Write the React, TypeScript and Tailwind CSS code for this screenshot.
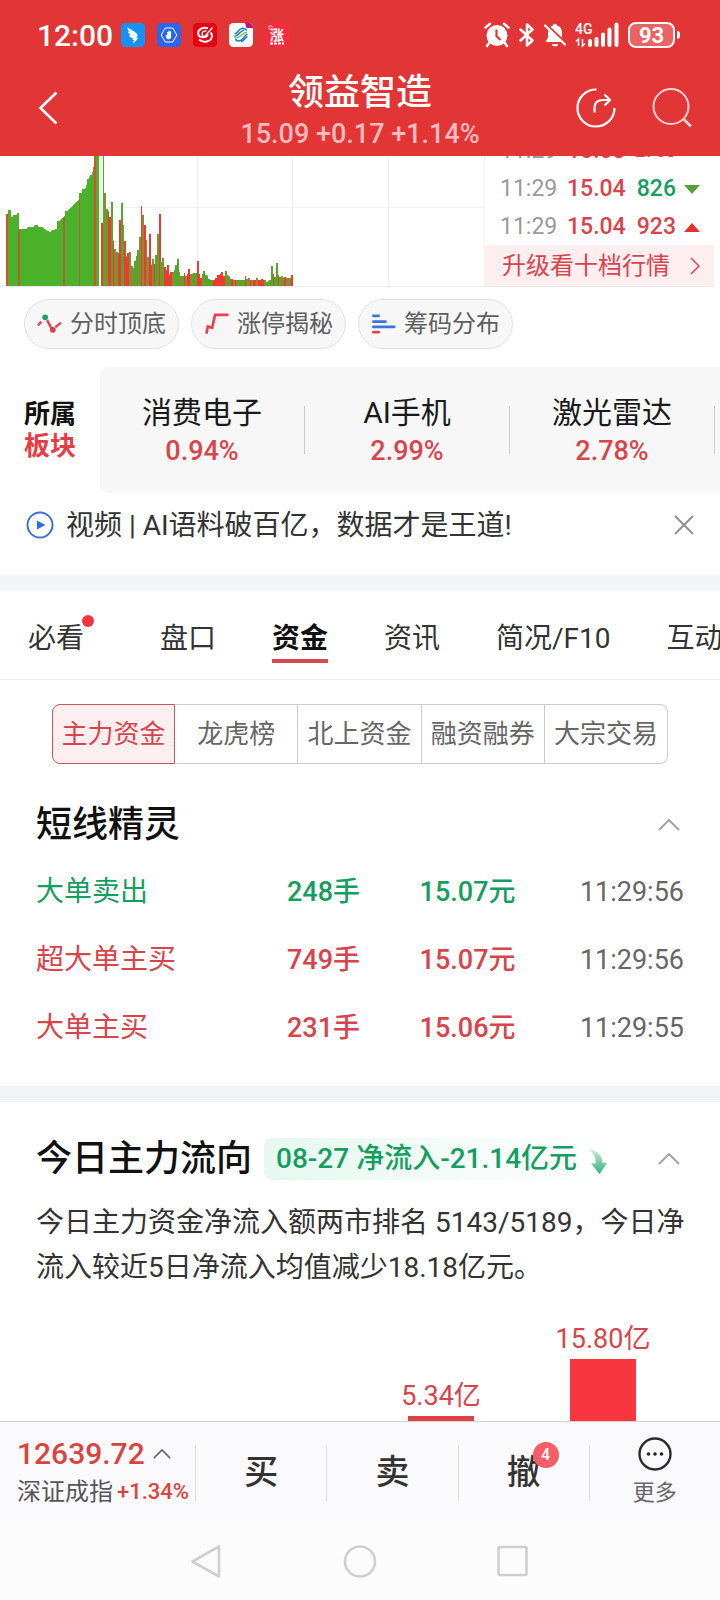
import React from 'react'
import clsx from 'clsx'

type Tone = 'up' | 'down'

interface ITrade {
  name: string
  count: string
  price: string
  time: string
  tone: Tone
}

const UP = 'text-[#d8444c]'
const DOWN = 'text-[#149e60]'

const ticks = [
  { time: '11:29', price: '15.03', volume: '2763', tone: 'up' },
  { time: '11:29', price: '15.04', volume: '826', tone: 'down' },
  { time: '11:29', price: '15.04', volume: '923', tone: 'up' },
]

const boards = [
  { name: '消费电子', change: '0.94%' },
  { name: 'AI手机', change: '2.99%' },
  { name: '激光雷达', change: '2.78%' },
]

const tabs = ['必看', '盘口', '资金', '资讯', '简况/F10', '互动']

const segments = ['主力资金', '龙虎榜', '北上资金', '融资融券', '大宗交易']

const trades: ITrade[] = [
  { name: '大单卖出', count: '248手', price: '15.07元', time: '11:29:56', tone: 'down' },
  { name: '超大单主买', count: '749手', price: '15.07元', time: '11:29:56', tone: 'up' },
  { name: '大单主买', count: '231手', price: '15.06元', time: '11:29:55', tone: 'up' },
]

// call auction outline
const auction =
  'M0 130V58H2V54H5V61H7V59H11V57H13V73H20L22 71H27L29 69H32V71H36L38 73L42 75L44 76L47 74L51 73V65H53L56 62H57L59 59V55H61L64 52L67 49L70 46L73 44V37H76V33H79L81 28V23H83L84 19H86L87 14L88 9V0H93V130Z'

// one letter of colour and the height for every minute after the open
const minutes =
  'r63 g130 o93 g77 r75 r69 g84 r45 o37 o34 r33 r66 g83 g61 r45 r29 r33 o34 o20 o18 g25 g30 g36 o49 r80 o71 r61 o46 o29 r52 r21 o27 r22 g31 g52 r72 o24 g28 r19 r16 r21 r11 r14 o14 g16 g21 g27 o14 o10 g10 r13 o10 r12 r17 o12 o12 g13 g13 r25 r12 r8 o12 g15 g11 o10 g7 g6 g6 r6 r8 r11 r11 r12 r14 r10 g15 o11 g10 o7 r7 o6 r6 o6 g6 g6 g6 g6 r10 o7 o8 r6 o6 r6 r6 o8 r6 r6 r7 r6 o6 g4 g5 g6 g20 r12 g9 g23 r11 o9 g10 o8 r9 o8 o8 o8 r11'.split(' ')

const barColor: Record<string, string> = { r: '#f0392f', g: '#4faa2b', o: '#8c8a33' }

function VolumeChart() {
  return (
    <svg viewBox="0 0 478 130" preserveAspectRatio="none" className="block h-[130px] w-full" shapeRendering="crispEdges">
      <path d="M191.5 0V130M286.5 0V130M382.5 0V130M96 51.5H478" stroke="#efefef" strokeWidth="1.5" fill="none" />
      <path d={auction} fill="#4cb12a" />
      <path d="M1 58V130M13 73V130M58 61V130M73.500 44V130M89 0V130" stroke="#b5622f" strokeWidth="1.6" />
      <path d="M1 58V130M89 6V130" stroke="#e04a35" strokeWidth="1.6" />
      <path d="M95 0V68" stroke="#e2f2dc" strokeWidth="2" />
      {minutes.map((item, index) => {
        const height = Number(item.slice(1))
        return (
          <rect key={index} x={95 + index * 1.65} y={130 - height} width="1.8" height={height} fill={barColor[item[0]]} />
        )
      })}
    </svg>
  )
}

function StatusBar() {
  return (
    <div className="flex h-[70px] items-center justify-between pr-10 pl-[37px]">
      <div className="flex items-center gap-3">
        <span className="-mr-1 text-[30px] font-medium">12:00</span>
        <svg viewBox="0 0 24 24" className="size-6">
          <rect width="24" height="24" rx="4.500" fill="#1492f5" />
          <path d="M6.200 4.500c3 1.800 7 3.400 9.600 6.200 1 1.100.9 2.200.3 3.300l-.7 1.300h1.800l-5.200 5.500 1-3.900h-1.600l.8-1.700c-2.400-.2-3.800-1.500-4.300-3.200l2.500.5C8.200 11.500 7 9.900 7 8.300l2.300 1C7.600 7.900 6.500 6.400 6.200 4.500z" fill="#fff" />
        </svg>
        <svg viewBox="0 0 24 24" className="size-6">
          <rect width="24" height="24" rx="4.500" fill="#2a67ec" />
          <path d="M8.200 5h7.600l4 7-4 7H8.200l-4-7z" fill="none" stroke="#fff" strokeWidth="1" />
          <path d="M8.800 11.800l1.400.8V9h1.300v2.500V7.800h1.300v3.700V8.500h1.300v6.300l-1.500 1.400h-2.200L8.800 14z" fill="#fff" />
        </svg>
        <svg viewBox="0 0 24 24" className="size-6">
          <rect width="24" height="24" rx="4.500" fill="#e60012" />
          <path d="M15 5.200C9.500 3.400 4.500 6.800 5.200 11c.6 3.200 5 4.200 8 2.400M6 16.500c4 3.600 12.600 2.700 13-3.500 0-1.400-.5-2.500-1.500-3.500" fill="none" stroke="#fff" strokeWidth="2" />
          <path d="M19.500 4.500l-8 9.300M13.500 8.200a3 3 0 1 0 1.600 3.300" fill="none" stroke="#fff" strokeWidth="1.400" />
        </svg>
        <svg viewBox="0 0 24 24" className="size-6">
          <rect width="24" height="24" rx="4.500" fill="#fff" />
          <path d="M5.500 11c3-.5 4-5.500 8-5.800 2 0 3.500 1 4.500 2.200M5.500 13.500c4-.5 5.500-6 9.500-6.200M18.500 11c-3 .5-4 7-9 7-1.500 0-2.500-.7-3.200-1.700M18.500 13.500c-2 .5-3 4.500-6.500 5.300" fill="none" stroke="#1b80c4" strokeWidth="1.500" />
          <path d="M6 15.500c5 0 6.500-6 12-6.300" fill="none" stroke="#7fbf45" strokeWidth="1.600" />
          <path d="M16 0h3.500A4.500 4.500 0 0 1 24 4.500V5h-6.500z" fill="#b5157f" />
        </svg>
        <svg viewBox="0 0 24 24" className="size-6">
          <rect width="24" height="24" rx="4.500" fill="#fb2b3f" />
          <circle cx="5.500" cy="4.500" r="1.800" fill="none" stroke="#fff" strokeWidth="0.800" />
          <text x="12" y="17" textAnchor="middle" fontSize="14" fontWeight="700" fill="#fff">涨</text>
          <path d="M5 20.500H19" stroke="#fff" strokeWidth="2" strokeDasharray="3 1" />
        </svg>
      </div>
      <div className="flex items-center gap-[9px]">
        <svg viewBox="0 0 26 26" className="size-[26px]">
          <circle cx="13" cy="13.500" r="10.500" fill="#fff" />
          <path d="M1.500 5.500L6 1.800M24.500 5.500L20 1.800M5.500 20.500L3 24M20.500 20.500L23 24" stroke="#fff" strokeWidth="2.400" strokeLinecap="round" />
          <path d="M12.500 7.500V14L16.500 18" stroke="#e23536" strokeWidth="2.200" fill="none" />
        </svg>
        <svg viewBox="0 0 16 24" className="h-6 w-4" fill="none" stroke="#fff" strokeWidth="2.500" strokeLinejoin="round" strokeLinecap="round">
          <path d="M1.500 6.500L13.500 17.500L8 22.500V1.500L13.500 6.500L1.500 17.500" />
        </svg>
        <svg viewBox="0 0 22 24" className="h-6 w-[22px]">
          <path d="M11 .8a2 2 0 0 1 2 1.700c3.400.9 5 3.600 5 7v5l2.500 4.500h-19L4 14.500v-5c0-3.400 1.600-6.100 5-7a2 2 0 0 1 2-1.700z" fill="#fff" />
          <path d="M8 21h6a3 2.500 0 0 1-6 0z" fill="#fff" />
          <path d="M1.500 .5L21.500 19.500" stroke="#e23536" strokeWidth="2" />
          <path d="M1 2.500L21 21.500" stroke="#fff" strokeWidth="2.200" strokeLinecap="round" />
        </svg>
        <svg viewBox="0 0 44 26" className="h-[26px] w-11">
          <text x="0" y="12" fontSize="14" fontWeight="500" fill="#fff">4G</text>
          <path d="M1 19.500L3.500 17V24M7.500 17V24L10 21.500" stroke="#fff" strokeWidth="1.500" fill="none" />
          <path d="M15 19V23M21.500 17V23M28 12.500V23M34.500 7.500V23M41.500 2.500V23" stroke="#fff" strokeWidth="4" strokeLinecap="round" />
        </svg>
        <div className="flex items-center gap-0.5">
          <span className="flex h-[26px] w-[47px] items-center justify-center rounded-lg border-2 border-white bg-[#ea6465] text-[22px] font-bold">93</span>
          <span className="h-2 w-[3px] rounded-r-sm bg-white" />
        </div>
      </div>
    </div>
  )
}

function Chevron({ className = 'h-3 w-[22px]' }: { className?: string }) {
  return (
    <svg viewBox="0 0 22 12" className={className} fill="none" stroke="currentColor" strokeWidth="2">
      <path d="M1 11L11 1L21 11" />
    </svg>
  )
}

function SectionToggle() {
  return (
    <button aria-label="收起" className="ml-auto flex h-10 items-center pr-1 text-[#a3a3a3]">
      <Chevron />
    </button>
  )
}

export default function App() {
  return (
    <div className="flex h-screen flex-col overflow-hidden bg-white font-[Roboto,'Noto_Sans_CJK_SC',sans-serif] text-[#333]">
      <header className="shrink-0 bg-[#e23536] text-white">
        <StatusBar />
        <div className="grid h-[86px] grid-cols-[1fr_auto_1fr] items-start">
          <button aria-label="返回" className="flex h-[76px] items-center pl-[38px]">
            <svg viewBox="0 0 20 34" className="h-[34px] w-5" fill="none" stroke="#fff" strokeWidth="2.600">
              <path d="M18.500 1.500L2.500 17L18.500 32.500" />
            </svg>
          </button>
          <div className="text-center">
            <h1 className="text-[36px] leading-[46px] font-medium">领益智造</h1>
            <p className="text-[27px] leading-9 font-medium text-[#f7bcbd]">15.09 +0.17 +1.14%</p>
          </div>
          <div className="flex h-[76px] items-center justify-end gap-9 pr-7">
            <button aria-label="分享">
              <svg viewBox="0 0 40 40" className="size-10" fill="none" stroke="#fff" strokeWidth="2.200">
                <path d="M20.500 1.500A18.500 18.500 0 1 0 38.500 20" />
                <path d="M18.500 24.500V20C18.500 14 22 12 27 12H33.500M28.500 6.500L34 12L28.500 17.500" />
              </svg>
            </button>
            <button aria-label="搜索">
              <svg viewBox="0 0 40 40" className="size-10" fill="none" stroke="#fbd3d3" strokeWidth="2">
                <circle cx="19" cy="18.500" r="17.500" />
                <path d="M32 31.500L39 38.500" strokeWidth="2.600" />
              </svg>
            </button>
          </div>
        </div>
      </header>

      <main className="flex min-h-0 flex-1 flex-col overflow-hidden">
        <section className="mx-1.5 flex shrink-0 border-b border-[#e9e9e9]">
          <div className="min-w-0 flex-1">
            <VolumeChart />
          </div>
          <div className="flex h-[130px] w-[230px] flex-col justify-end overflow-hidden border-l border-[#f2f2f2]">
            {ticks.map((tick, index) => (
              <div key={index} className="flex h-[38px] shrink-0 items-center pt-0.5 pr-3.5 pl-[15px] text-[23px] font-medium">
                <span className="w-[67px] font-normal text-[#999]">{tick.time}</span>
                <span className={UP}>{tick.price}</span>
                <span className={clsx('ml-auto', tick.volume.length > 3 && 'text-lg', tick.tone === 'up' ? UP : DOWN)}>{tick.volume}</span>
                <svg viewBox="0 0 16 9" className={clsx('ml-2 h-[9px] w-4', index === 0 && 'invisible')}>
                  {tick.tone === 'up' ? <path d="M8 0L16 9H0z" fill="#e8302f" /> : <path d="M0 0H16L8 9z" fill="#5a9e3a" />}
                </svg>
              </div>
            ))}
            <a href="#level2" className={clsx('flex h-[41px] shrink-0 items-center justify-between bg-[#fdeeef] pr-3.5 pl-[17px] text-2xl', UP)}>
              升级看十档行情
              <svg viewBox="0 0 10 18" className="h-[18px] w-2.5" fill="none" stroke="currentColor" strokeWidth="1.500">
                <path d="M1 1L9 9L1 17" />
              </svg>
            </a>
          </div>
        </section>

        <div className="mx-6 mt-3 flex shrink-0 gap-3 text-2xl text-[#5e5e5e]">
          <button className="flex h-[50px] items-center gap-2 rounded-full border border-[#e2e2e2] bg-[#f7f7f7] px-3">
            <svg viewBox="0 0 26 24" className="h-6 w-[25px]" fill="none" stroke="#dc4850" strokeWidth="2.500">
              <path d="M1 13.500L4.500 9.500M10.500 8L15 16.500M19 15.500L25 10.500" />
              <circle cx="8.500" cy="5" r="3" fill="#1da367" stroke="none" />
              <circle cx="16.500" cy="18" r="3" fill="#dc3c46" stroke="none" />
            </svg>
            分时顶底
          </button>
          <button className="flex h-[50px] items-center gap-2 rounded-full border border-[#e2e2e2] bg-[#f7f7f7] px-3">
            <svg viewBox="0 0 26 24" className="h-6 w-[25px]" fill="none" stroke="#e5434d" strokeWidth="2.800">
              <path d="M2.500 22L4 14.500L8.500 16L11.500 2.500H25.500" />
            </svg>
            涨停揭秘
          </button>
          <button className="flex h-[50px] items-center gap-2 rounded-full border border-[#e2e2e2] bg-[#f7f7f7] px-3">
            <svg viewBox="0 0 26 24" className="h-6 w-[25px]" fill="none" stroke="#3c76dc" strokeWidth="3" strokeLinecap="round">
              <path d="M2.500 3.500H8M2.500 9.500H15M2.500 15H24" />
              <path d="M2.500 20.500H8" stroke="#dc4650" />
            </svg>
            筹码分布
          </button>
        </div>

        <section className="mt-[18px] flex h-[126px] shrink-0 items-stretch">
          <h2 className="flex w-[100px] shrink-0 flex-col justify-center pl-6 text-[26px] leading-8 font-bold text-[#111]">
            所属
            <span className="text-[#e63c45]">板块</span>
          </h2>
          <ul className="flex min-w-0 flex-1 items-center overflow-hidden rounded-l-lg bg-[#f7f7f7]">
            {boards.map(board => (
              <li key={board.name} className="flex h-12 w-[205px] shrink-0 flex-col items-center justify-center border-r border-[#ccc] pt-1 text-center whitespace-nowrap">
                <span className="text-[30px] leading-[38px] text-[#1a1a1a]">{board.name}</span>
                <span className={clsx('text-[27px] leading-[38px] font-medium', UP)}>{board.change}</span>
              </li>
            ))}
          </ul>
        </section>

        <div className="mb-[18px] flex h-16 shrink-0 items-center px-[26px]">
          <svg viewBox="0 0 28 28" className="size-7" fill="none">
            <circle cx="14" cy="14" r="12.500" stroke="#3a74d8" strokeWidth="2" />
            <path d="M11 9.500V18.500L19.500 14z" fill="#2a6fee" />
          </svg>
          <a href="#video" className="ml-3 pt-0.5 text-[28px]">视频 | AI语料破百亿，数据才是王道!</a>
          <button aria-label="关闭" className="ml-auto">
            <svg viewBox="0 0 20 20" className="size-5" stroke="#919191" strokeWidth="2">
              <path d="M1 1L19 19M19 1L1 19" />
            </svg>
          </button>
        </div>

        <div className="h-4 shrink-0 bg-[#f3f4f9]" />

        <nav className="flex h-[89px] shrink-0 items-center gap-14 overflow-hidden border-b border-[#ededed] pt-2 pl-7 text-[28px] leading-10 whitespace-nowrap">
          {tabs.map((tab, index) => (
            <button key={tab} className={clsx('relative shrink-0', index === 0 && 'mr-5', tab === '资金' && 'font-bold text-[#111]')}>
              {tab}
              {index === 0 && <span className="absolute -top-1 -right-2.5 size-3 rounded-full bg-[#f4333f]" />}
              {tab === '资金' && <span className="absolute inset-x-0 -bottom-1 h-1 bg-[#d34a52]" />}
            </button>
          ))}
        </nav>

        <div className="mx-[52px] mt-6 mb-7 grid h-[60px] shrink-0 grid-cols-5 text-[26px] text-[#666]">
          {segments.map((segment, index) => (
            <button
              key={segment}
              className={clsx(
                'border-y border-r whitespace-nowrap',
                index === 0 ? 'rounded-l-lg border-l border-[#c9545b] bg-[#fdeeef] text-[#d8444c]' : 'border-[#ccc]',
                index === segments.length - 1 && 'rounded-r-lg'
              )}
            >
              {segment}
            </button>
          ))}
        </div>

        <section className="shrink-0 px-9 pb-6">
          <div className="flex h-[66px] items-center">
            <h2 className="text-[36px] font-medium text-[#111]">短线精灵</h2>
            <SectionToggle />
          </div>
          <table className="w-full table-fixed text-right text-[27px]">
            <tbody>
              {trades.map(trade => (
                <tr key={trade.name} className={clsx('h-[68px]', trade.tone === 'up' ? UP : DOWN)}>
                  <td className="w-[30%] text-left text-[28px]">{trade.name}</td>
                  <td className="w-[20%] font-medium">{trade.count}</td>
                  <td className="w-[24%] font-medium">{trade.price}</td>
                  <td className="w-[26%] text-[#666]">{trade.time}</td>
                </tr>
              ))}
            </tbody>
          </table>
        </section>

        <div className="h-4 shrink-0 bg-[#f3f4f9]" />

        <section className="flex flex-1 flex-col pt-6">
          <div className="flex h-[66px] shrink-0 items-center px-9">
            <h2 className="text-[36px] font-medium text-[#111]">今日主力流向</h2>
            <div className={clsx('ml-3 flex h-[42px] items-center gap-3 rounded-lg bg-linear-to-r from-[#e6f8f0] to-white pr-2 pl-3 text-[28px] font-medium', DOWN)}>
              08-27 净流入-21.14亿元
              <svg viewBox="0 0 18 26" className="mt-1 h-[26px] w-[18px]">
                <defs>
                  <linearGradient id="fall" x1="0" y1="0" x2="0" y2="1">
                    <stop offset="0" stopColor="#c9ecdc" />
                    <stop offset="1" stopColor="#35b27c" />
                  </linearGradient>
                </defs>
                <path d="M0 1C9 3 13.500 8 13.500 15H18L10.500 26L2 15.500H6.500C7 10 5 5 0 1z" fill="url(#fall)" />
              </svg>
            </div>
            <SectionToggle />
          </div>
          <p className="mt-2 pr-6 pl-9 text-[28px] leading-[45px]">
            今日主力资金净流入额两市排名 5143/5189，今日净流入较近5日净流入均值减少18.18亿元。
          </p>
          <div className={clsx('grid flex-1 grid-cols-4 items-end px-9 text-[27px] leading-10', UP)}>
            <div className="col-start-3 flex flex-col items-center">
              5.34亿
              <div className="h-[5px] w-[66px] bg-[#e0404a]" />
            </div>
            <div className="flex flex-col items-center">
              15.80亿
              <div className="h-[62px] w-[66px] bg-[#f83640]" />
            </div>
          </div>
        </section>
      </main>

      <footer className="shrink-0 bg-[#fcfcfc]">
        <div className="flex h-[102px] items-center border-t border-[#d3d4d8] bg-[#fafafc]">
          <div className="w-[195px] shrink-0 pl-[17px] leading-[38px] whitespace-nowrap">
            <button className="flex items-center gap-2 text-[30px] font-medium text-[#d8443f]">
              12639.72
              <Chevron className="h-[10px] w-[18px] text-[#666]" />
            </button>
            <div className="flex items-center gap-1 text-2xl leading-[38px] text-[#55555a]">
              深证成指
              <span className="text-[22px] font-medium text-[#d8443f]">+1.34%</span>
            </div>
          </div>
          <div className="grid flex-1 grid-cols-4">
            <button className="h-14 border-l border-[#dcdce0] text-[34px] font-medium">买</button>
            <button className="h-14 border-l border-[#dcdce0] text-[34px] font-medium">卖</button>
            <button className="h-14 border-l border-[#dcdce0] text-[34px] font-medium">
              <span className="relative">
                撤
                <span className="absolute -top-2.5 -right-[18px] flex size-[26px] items-center justify-center rounded-full bg-[#f55d67] text-base text-white">4</span>
              </span>
            </button>
            <button className="flex h-14 flex-col items-center justify-center border-l border-[#dcdce0] text-[22px] leading-8 text-[#666]">
              <svg viewBox="0 0 34 34" className="mb-1.5 size-[34px] shrink-0" fill="#222">
                <circle cx="17" cy="17" r="15.500" fill="none" stroke="#2b2b2b" strokeWidth="2.400" />
                <circle cx="10.500" cy="17" r="1.800" />
                <circle cx="17" cy="17" r="1.800" />
                <circle cx="23.500" cy="17" r="1.800" />
              </svg>
              更多
            </button>
          </div>
        </div>
        <div className="flex h-[77px] items-center justify-center gap-[120px]">
          <button aria-label="后退">
            <svg viewBox="0 0 34 34" className="size-[34px]" fill="none" stroke="#cfcfcf" strokeWidth="2.600" strokeLinejoin="round">
              <path d="M30 1.500V31.500L3.500 16.500z" />
            </svg>
          </button>
          <button aria-label="主屏幕">
            <svg viewBox="0 0 34 34" className="size-[34px]" fill="none" stroke="#cfcfcf" strokeWidth="2.600">
              <circle cx="17" cy="16.500" r="15" />
            </svg>
          </button>
          <button aria-label="最近任务">
            <svg viewBox="0 0 34 34" className="size-[34px]" fill="none" stroke="#cfcfcf" strokeWidth="2.600">
              <rect x="1.500" y="2" width="28" height="28" rx="1.500" />
            </svg>
          </button>
        </div>
      </footer>
    </div>
  )
}
